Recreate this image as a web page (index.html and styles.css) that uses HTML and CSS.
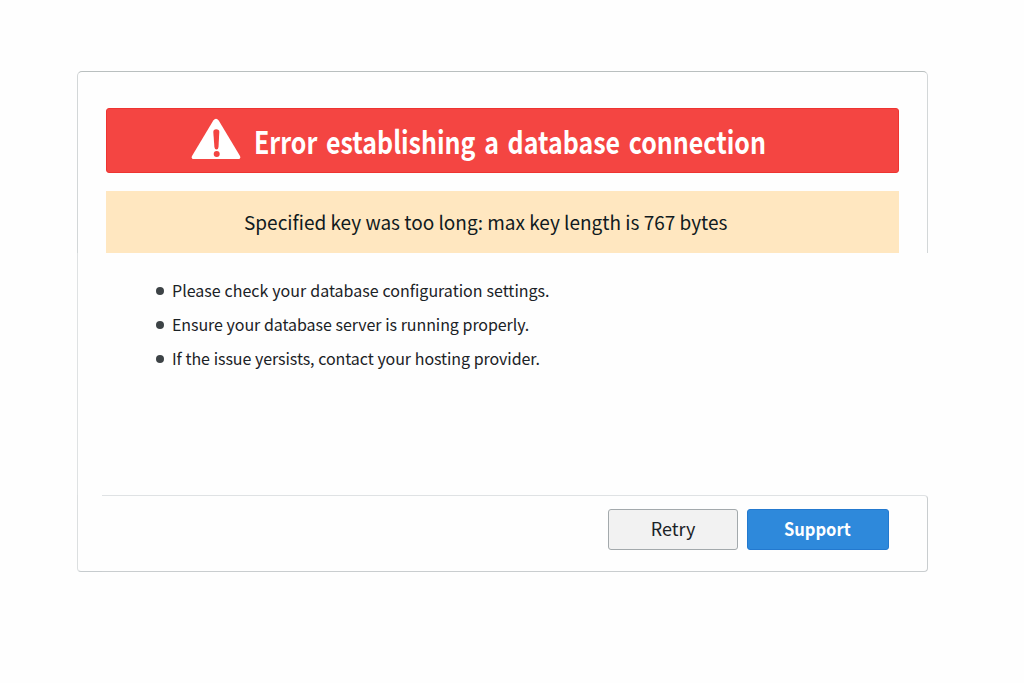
FILE: index.html
```
<!DOCTYPE html>
<html lang="en">
<head>
    <meta charset="UTF-8">
    <meta name="viewport" content="width=device-width, initial-scale=1.0">
    <title>Database Error</title>
    <link rel="stylesheet" href="styles.css">
</head>
<body>
    <div class="container">
        <div class="notices">
            <div class="error">
                <svg class="icon" viewBox="0 0 50 42" width="50" height="42">
                    <path d="M22.3 2.5 Q25 -0.8 27.7 2.5 L49 38 Q50 41 47.5 41 L2.5 41 Q0 41 1 38 Z" fill="#fff"/>
                    <path d="M22.3 14 Q22.3 11.2 25.2 11.2 Q28.4 11.2 28.3 14 L27.5 29 Q27.2 31.5 25.5 31.5 Q23.7 31.5 23.4 29 Z" fill="#f44542"/>
                    <circle cx="25.7" cy="36" r="3" fill="#f44542"/>
                </svg>
                <h1>Error establishing a database connection</h1>
            </div>
            <div class="warning"><span>Specified key was too long: max key length is 767 bytes</span></div>
        </div>
        <div class="content">
            <ul>
                <li><span class="tip-one">Please check your database configuration settings.</span></li>
                <li><span class="tip-two">Ensure your database server is running properly.</span></li>
                <li><span class="tip-three">If the issue yersists, contact your hosting provider.</span></li>
            </ul>
        </div>
        <div class="footer">
            <div class="footer-edge"></div>
            <div class="actions">
                <button class="retry">Retry</button>
                <button class="support"><span>Support</span></button>
            </div>
        </div>
    </div>
</body>
</html>
```
FILE: styles.css
```
* {
    box-sizing: border-box;
}
body {
    font-family: "Noto Sans CJK SC", "Noto Sans", sans-serif;
    margin: 0;
    background-color: #fefefe;
    color: #1b2226;
}
.container {
    width: 851px;
    height: 501px;
    margin: 71px 0 0 77px;
    display: flex;
    flex-direction: column;
}
.notices {
    height: 182px;
    padding: 36px 28px 0;
    border: 1px solid #d3d7d8;
    border-top-color: #b9bfbf;
    border-bottom: 0;
    border-radius: 5px 5px 0 0;
}
.error {
    display: flex;
    align-items: center;
    height: 65px;
    padding-left: 84px;
    background-color: #f44542;
    border: 1px solid #ee3431;
    border-radius: 3px;
    color: white;
}
.icon {
    flex-shrink: 0;
    margin-bottom: 3px;
}
h1 {
    width: 520px;
    margin: 0 0 0 13px;
    font-size: 31px;
    line-height: 40px;
    font-weight: bold;
    word-spacing: 3.7px;
    white-space: nowrap;
    transform: scaleX(0.806);
    transform-origin: left;
}
.warning {
    display: flex;
    align-items: center;
    height: 62px;
    margin-top: 18px;
    padding: 0 0 2px 138px;
    background-color: #ffe7c0;
    color: #101a20;
    font-size: 19px;
    white-space: nowrap;
}
.content {
    height: 242px;
    padding: 21px 0 0 78px;
    border-left: 1px solid #dfe2e3;
}
ul {
    margin: 0;
    padding: 0;
    list-style: none;
}
li {
    display: flex;
    align-items: center;
    height: 34px;
    font-size: 16px;
    white-space: nowrap;
}
li span {
    padding-bottom: 2px;
}
li::before {
    content: "";
    width: 8px;
    height: 8px;
    margin-right: 8px;
    border-radius: 50%;
    background-color: #3d4346;
}
.tip-one {
    word-spacing: 0.4px;
}
.tip-two,
.tip-three {
    letter-spacing: -0.08px;
    word-spacing: 0.3px;
}
.footer {
    display: flex;
    height: 77px;
}
.footer-edge {
    width: 25px;
    border-left: 1px solid #dcdfe0;
    border-bottom: 1px solid #c6cbce;
    border-radius: 0 0 0 4px;
}
.actions {
    flex: 1;
    display: flex;
    justify-content: flex-end;
    gap: 9px;
    padding: 13px 38px 0 0;
    border: 1px solid #c9cdcf;
    border-top-color: #dfe2e4;
    border-left: 0;
    border-radius: 0 4px 4px 0;
}
button {
    height: 41px;
    padding: 0 0 3px;
    border-radius: 3px;
    font-family: inherit;
    font-size: 18px;
}
.retry {
    width: 130px;
    background-color: #f2f2f2;
    border: 1px solid #a3a9ac;
    color: #1b2226;
}
.support {
    width: 142px;
    padding-right: 2px;
    background-color: #2e89db;
    border: 1px solid #2379cf;
    color: white;
    font-weight: bold;
}
.support span {
    display: inline-block;
    transform: scaleX(0.92);
}
```
